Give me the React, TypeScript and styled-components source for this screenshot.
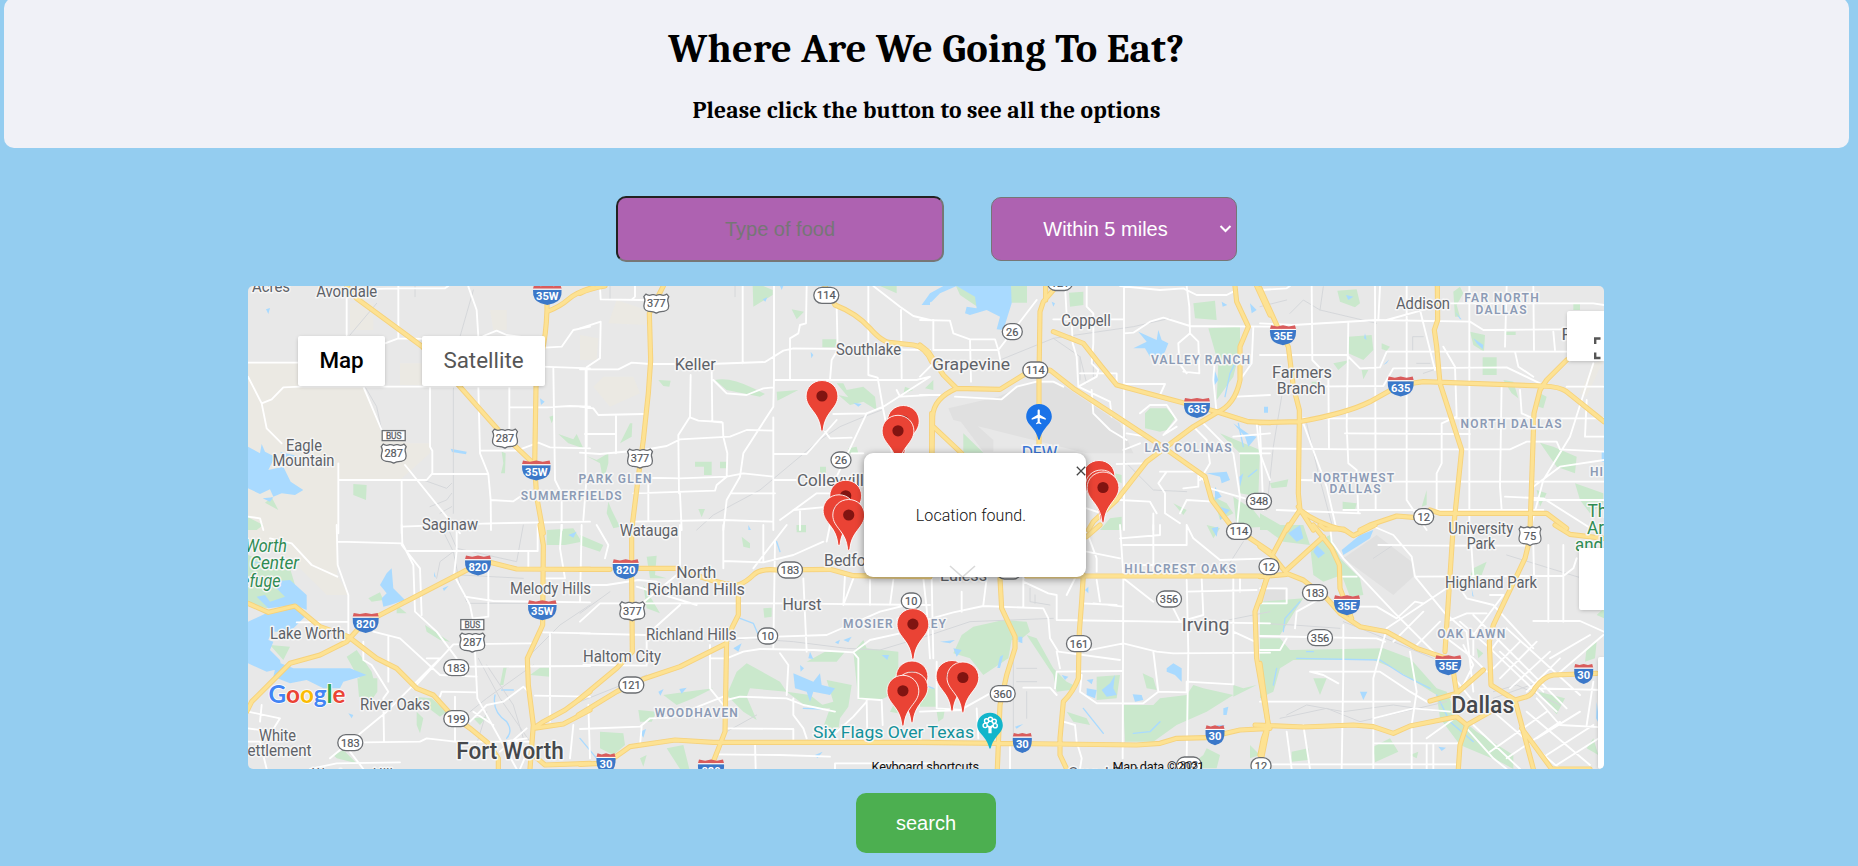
import React from "react";
import styled, { createGlobalStyle } from "styled-components";

const GlobalStyle = createGlobalStyle`
  html, body { margin: 0; background: #94cdf0; overflow: hidden; }
  * { box-sizing: border-box; }
`;

const Page = styled.main`
  height: 866px;
  padding: 0 9px 0 4px;
  display: flex;
  flex-direction: column;
  align-items: center;
  background: #94cdf0;
  font-family: "Liberation Sans", Arial, sans-serif;
`;

const Header = styled.header`
  width: 100%;
  height: 150px;
  margin-top: -2px;
  padding-top: 27px;
  border-radius: 10px;
  background: #f0f1f7;
  color: #000;
  text-align: center;
  font-family: Cambria, "Liberation Serif", serif;
`;

const Title = styled.h1`
  margin: 0;
  font-size: 40.5px;
  line-height: 48px;
  letter-spacing: 0.25px;
`;

const Subtitle = styled.h2`
  margin: 23px 0 0;
  font-size: 23.5px;
  line-height: 30px;
  letter-spacing: 0.16px;
`;

const SearchRow = styled.div`
  display: flex;
  align-items: center;
  gap: 47px;
  margin-top: 48px;
`;

const FoodInput = styled.input`
  width: 328px;
  height: 66px;
  border: 2px solid;
  border-color: #222 #767676 #767676 #222;
  border-radius: 10px;
  background: #ae62b1;
  color: #fff;
  font: 20px "Liberation Sans", Arial, sans-serif;
  text-align: center;
  &::placeholder { color: #767676; opacity: 1; }
`;

const SelectWrap = styled.div`
  position: relative;
  display: flex;
`;

const RangeSelect = styled.select`
  appearance: none;
  width: 246px;
  height: 64px;
  padding: 0 17px 0 0;
  border: 1px solid #767676;
  border-radius: 10px;
  background: #ae62b1;
  color: #fff;
  font: 20px "Liberation Sans", Arial, sans-serif;
  text-align: center;
  text-align-last: center;
`;

const Chevron = styled.svg`
  position: absolute;
  right: 5px;
  top: 27px;
  pointer-events: none;
`;

const MapFrame = styled.section`
  position: relative;
  width: 1356px;
  height: 483px;
  margin: 24px 1px 0 0;
  flex: none;
  overflow: hidden;
  border-radius: 5px;
  background: #e8e8e8;
  font-family: Roboto, sans-serif;
`;

const MapCanvas = styled.svg`
  display: block;
  font-family: Roboto, sans-serif;
`;

const MapTypeBar = styled.div`
  position: absolute;
  left: 50px;
  top: 50px;
  display: flex;
  gap: 37px;
`;

const MapTypeButton = styled.button<{ $active?: boolean; $width: number }>`
  width: ${(p) => p.$width}px;
  height: 50px;
  padding: 0 0 3px;
  border: 0;
  border-radius: 2px;
  background: #fff;
  box-shadow: 0 1px 4px -1px rgba(0, 0, 0, 0.3);
  color: ${(p) => (p.$active ? "#000" : "#565656")};
  font: ${(p) => (p.$active ? 500 : 400)} 22.4px Roboto, sans-serif;
`;

const CornerControl = styled.div<{ $top: number; $width: number; $height: number }>`
  position: absolute;
  right: 0;
  top: ${(p) => p.$top}px;
  width: ${(p) => p.$width}px;
  height: ${(p) => p.$height}px;
  background: #fff;
  border-radius: 2px 0 0 2px;
  box-shadow: 0 1px 4px -1px rgba(0, 0, 0, 0.3);
  display: flex;
  justify-content: flex-end;
  align-items: flex-end;
`;

const InfoWindow = styled.div`
  position: absolute;
  left: 616px;
  top: 167px;
  width: 222px;
  height: 124px;
  display: flex;
  align-items: center;
  justify-content: center;
  padding: 0 8px 0 0;
  border-radius: 9px;
  background: #fff;
  box-shadow: 0 2px 7px 1px rgba(0, 0, 0, 0.35);
  color: #111;
  font: 300 16px Roboto, sans-serif;
  letter-spacing: 0.07px;
`;

const CloseIcon = styled.svg`
  position: absolute;
  right: 0;
  top: 13px;
`;

const Tail = styled.svg`
  position: absolute;
  left: 84px;
  bottom: 0;
`;

const SearchButton = styled.button`
  width: 140px;
  height: 60px;
  margin: 24px 1px 0 0;
  border: 0;
  border-radius: 10px;
  background: #4caf50;
  color: #fff;
  font: 20px "Liberation Sans", Arial, sans-serif;
`;

type Sector = {
  x: number; y: number;
  tan?: string; dark?: string; park: string; water: string; stream?: string;
  rail: string; street: string; highway: string;
};

// Each sector holds its geometry at three times map scale, relative to its own origin.
const sectors: Sector[] = [
  {
    x: 240, y: 280,
    tan: "M24 248H175V320H370L425 460L500 490H570V520L480 600H295V760H24ZM330 70H400V150H330ZM480 250H545V315H480ZM750 90H800V150H760Z",
    park: "M340 612L380 615L378 660L340 645ZM75 668L95 652L115 690ZM24 712L70 735L50 750H24ZM928 410L945 405L935 430ZM955 462L1000 478L1010 462L1030 505L985 490ZM785 515L797 520L795 580H783L790 550Z",
    water: "M24 500L60 520L65 492L75 515L105 530L85 570L130 560L152 605L190 630L165 645L125 640L100 650L90 628L60 642L24 625ZM78 88L90 84L85 102ZM632 506L680 515L678 523L636 516ZM900 355L914 365L903 375ZM68 655L100 652L90 665ZM120 515L180 530L135 532Z",
    rail: "M410 70L330 165M375 320L410 380L425 450M700 30L660 170L640 330V700M525 0V50M550 600L620 625L635 610M570 680L620 660L635 640M600 700L635 680",
    street: "M320 20V165M475 18V175M24 248H174M24 290L65 370L80 445L125 490M65 370L95 358L130 322L180 320H880M370 320L425 450M495 555L660 760M570 320V500L577 512V580L560 600H295M577 582H745L720 520L715 320M745 582L752 660L753 750M295 550V760M485 602V760M685 20L710 90L715 170M730 168L770 152L800 165L880 175M435 190L475 175L640 178M915 203L965 200L1000 150L1050 140M905 260L1050 265M808 320V500M808 382H920L990 378L1050 380M720 512H830L895 488L930 502L1050 505M940 265L945 600L965 640V750M1037 265V600M752 660L820 664L840 650L1050 640M485 740L750 730L1050 725M340 28L475 25H615L625 18M24 710L60 715L70 750",
    highway: "M320 18L350 55L547 200L660 320L775 450L880 550M921 60V90Q918 170 905 220L888 320L884 560L890 650L910 760M921 95Q960 80 985 58T1060 22",
  },
  {
    x: 580, y: 280,
    tan: "M0 165L55 175L50 240H0ZM70 290H160L180 340L90 380L40 320ZM110 60L200 90V135L85 130Z",
    park: "M518 18H550L578 30V45L520 80ZM635 88L672 95L650 118ZM727 178H770L768 202H727ZM235 300L272 302L268 320L250 318ZM405 300Q450 290 520 325L555 342L540 350L440 330ZM590 335L655 330L592 362ZM770 310H790L800 330L850 320L885 350L890 390L850 365L810 375L775 345L805 352ZM345 545H395V585H372V560H345ZM420 545H440V565H420ZM355 687H375L365 712ZM20 528L50 540L85 520V550L70 605L60 550ZM85 665L95 690L120 740L100 745L80 700ZM720 560H738V582H720ZM150 430H157L155 470L120 490ZM805 505L830 500L835 520H805ZM900 18L950 40V18ZM975 320L1000 330L970 342ZM650 735H678V750H650Z",
    water: "M1025 75L1050 48V75ZM692 215L700 225L694 235ZM600 18H610L605 30ZM820 368L845 372L835 380ZM505 735L513 750H505ZM548 58L562 52L556 65Z",
    rail: "M905 390L840 415L780 440L720 480L540 630L400 705L350 750M465 18V50M90 18V55",
    street: "M60 22L62 58L190 60M165 18V50L155 60M0 145L62 125L60 235L20 262V500M0 268H115L155 248L210 252H390L555 246L610 212L640 205L1050 210M488 18V250M582 18V300L580 380L490 520L480 590L440 660L430 750M680 18L678 130L660 135L655 160L630 175V300M770 80L773 210L755 240L750 300M865 18V285L893 293L910 390L960 640M963 90L965 295M880 18L960 80L1000 108L1050 120M585 300H1010L1050 290L910 380L860 400L760 402M332 285L330 410L295 465L297 640M395 270L397 425L428 428L430 470L442 520L440 590L410 615L405 632L160 640M330 412L355 422L425 426M0 380L40 385L55 405L190 402M108 405V520M15 462H108M0 518L60 522L190 510L260 498L300 478L450 470L500 450L580 452M400 300L440 340L500 345L550 325L580 322M170 592L300 595L440 590L490 580L580 590M580 600H650M580 412V750M735 455L750 475L815 473M860 400L770 590M770 420L680 522H580M815 520H850M155 725L430 720L580 725M205 590V720M20 590L10 720M455 640H585M600 720L710 640L780 640M640 690L750 680M950 330L960 350L1050 345M300 640L305 750M660 690V750",
    highway: "M0 40Q30 25 75 18M250 18L208 100L212 240L205 340L190 480L175 590L155 750M735 18L765 75Q830 100 870 145T935 188L1000 195Q1035 200 1055 245M1055 400V520",
  },
  {
    x: 920, y: 280,
    dark: "M235 350L320 310H420L600 430L640 520H500L100 420L85 385ZM100 395L125 395L220 480V515H190Z",
    park: "M108 18H170L172 80L120 45ZM273 18H321V68H273ZM447 38L490 35V75L450 80ZM820 70L885 62L890 120L825 115ZM865 145L960 140V210L940 290L890 360L895 250ZM130 460L190 518H130ZM675 400L690 385H740L765 415L740 450L720 455L675 445ZM900 460L1020 510L1015 650L960 640V520ZM940 650L1000 690L1040 740L950 745ZM15 325L40 300V330ZM585 580L605 585V610L585 600ZM540 750L570 715L605 710V750ZM760 670L800 690L790 705ZM880 650L920 670L940 700L900 720Z",
    water: "M5 75L30 40L70 18H273L275 70L250 150L230 148L240 110L200 90L150 105L135 100L140 80L170 85L165 50L110 18L60 40L35 65ZM640 205L680 185L655 155L710 180L715 150L725 180L745 190L735 215L720 235L690 230L675 205ZM940 430L990 465L1010 470L985 500L975 470ZM860 580L920 575L930 600L905 610L900 590ZM885 620L905 650L885 660ZM900 680L930 690L900 720ZM880 260L895 300L880 320ZM905 65L922 75L908 80ZM990 70L1010 90L995 100ZM395 65L405 70L400 80ZM970 580L960 620L958 590Z",
    stream: "M960 220L930 280L915 350M955 430L970 500M985 590L1010 570",
    rail: "M240 240L400 175L640 140L750 115M400 175L480 230L500 310M610 540L700 630L800 635M480 230V300M520 230V290",
    street: "M0 120L90 122L100 160L150 178H225L235 210H40V120M150 178L153 305M235 210L350 60M235 210L245 260M435 18L440 105L455 120L458 190L470 230L475 320L530 290L535 270L515 250L520 190V100L500 80V18M400 118H610M612 18V750M612 160L640 158L690 125L730 113L810 138L1050 140M800 18L808 80L810 160L775 190L778 250L800 280M810 160L835 185L838 280L790 275M600 18L720 30L790 25L830 45H920L940 35M475 320L570 365L575 410M480 280H590V310M105 350L245 358L290 320L350 305H400L430 320M515 330L520 400L570 450L620 480M612 312H735L720 345M660 400L690 375H740L770 420L730 465L770 440M680 470L620 460M850 430L940 520L960 650L950 750M890 400L880 300L885 230M820 440L860 480L870 550L840 600M590 552L680 550M600 660L690 665L710 700M720 575H830L870 625L975 655M740 575L715 610L735 640V700L780 730M950 350L1050 345M1000 140L995 250L960 300M940 470L1050 460M1010 430L1020 520L1050 600M835 575V620L790 625M610 510L660 490M500 685L545 700M0 290L40 250H80M0 345H60M780 700L800 660L880 665M700 700V750M960 520H1050",
    highway: "M0 195L25 215L70 285L110 325L240 328L310 285L345 272L390 270L460 325L560 390L720 495L855 590L875 660L935 740M400 30L370 65L360 95L357 290V500M377 18V60M110 325Q40 355 38 410L36 520M40 440L125 520M400 155L490 190L545 260L590 315L750 358L890 395L985 425L1050 428M945 18L950 65L985 140L960 200V300Q945 375 890 398L820 440L720 515L680 545L590 660L520 725L505 750M1010 18L1050 105",
  },
  {
    x: 1260, y: 280,
    tan: "M1000 250L1030 240L980 350L960 340Z",
    park: "M232 32L290 28L300 70L285 82L240 65ZM265 170L335 165L340 210L310 240L265 220ZM220 250L270 240L235 270ZM305 270H325L310 298ZM630 155L675 165L672 215L640 195ZM668 232H710V285H668ZM580 35L600 20L610 40L590 75L600 110L585 110ZM365 190L390 200L380 212L365 207ZM735 155H767V165H735ZM840 488L880 500L950 530L945 580L890 560ZM30 610L85 598L80 620L35 625ZM500 630V675L485 680ZM248 665L290 670L285 690L248 688ZM945 610L1030 640V670L990 700L960 660ZM730 300L760 305L775 355L755 340ZM840 340L860 350L850 385L835 380ZM0 700L70 740L60 750H0ZM940 70H960V90H940ZM155 305H175V317H155ZM830 630L860 640L840 680Z",
    water: "M258 45L280 50L265 60ZM370 255L388 238L380 250ZM640 175L670 195L668 208L650 190ZM585 95L605 118H600ZM12 380H24V398H12ZM315 160L320 180L312 175ZM1025 515H1032V545H1025Z",
    rail: "M90 100L130 60L180 90L350 130M0 80L80 60M180 90L190 20M70 320L40 500L20 690M458 210V170H490M470 250H510M490 280L520 270M140 430L180 600L220 750",
    street: "M0 130L100 135L350 120L630 125L670 150L920 148M155 18L157 240L205 290L207 505M345 18L347 690M0 225H260L300 265L360 262L380 215H920M440 18V660M475 70L500 170L525 270M130 415H1032M140 320L370 318L400 265L740 262L840 310M0 505L270 508H750L800 485L890 485L900 508L1032 515M120 600L345 605H1032M628 18V750M725 310L720 620L725 690M265 130L260 440L265 550L290 570L295 700M255 460L630 462M250 690H850M0 30L80 25L90 18M0 440L10 690M130 430L200 620L230 750M550 200L585 260L590 410L545 430V550L530 580V690M380 120L560 70H1000L1032 75M820 20L822 210M880 155L885 210M765 215L775 260L820 290M1000 250L930 470L850 600L810 750M810 660H1032M820 620L900 560L1032 540M920 320H1030M980 360L975 470H1032M355 120L360 20M50 690L300 700M735 650L850 655L1000 750M440 660L500 750M740 18L735 200M780 330L785 400L830 420",
    highway: "M0 25L50 135L85 200L100 320L118 390V425L115 640L120 690L80 750M0 428L118 425Q260 400 330 365L420 315L490 305L850 318Q900 320 920 335L1032 425M532 18L533 120L523 150L530 200L540 310L605 510L580 750M920 240L860 300L840 330L822 400L810 750M120 690Q170 730 250 750M300 750L330 735L410 708L460 712M510 690L540 700H860L920 745M115 680L160 750",
  },
  {
    x: 240, y: 525,
    tan: "M24 0H290L292 150L325 210H260L150 100L24 40Z",
    park: "M24 90L110 120L150 130L165 180L135 230L80 250L24 235ZM385 220L420 202L430 225L395 230ZM320 395L350 375L395 440L400 460H360L345 440ZM352 460H412V500L395 525L357 515ZM90 360L150 365L130 405ZM555 300L630 350L600 345L560 320ZM520 515L575 520L620 560L600 575L560 545ZM530 560L550 580L540 625L530 600ZM790 428H800L790 480H780ZM870 450L900 428H930V455ZM700 580L740 575L720 600ZM280 690L310 675L350 715L290 700ZM920 15L1000 10L1025 50L975 60H920ZM470 240L500 265H470Z",
    water: "M90 170L150 165L200 210V255L165 240L85 250L50 215L75 210L90 230L135 215ZM24 290L85 262L165 243L200 270L150 320H95L85 345L100 350L90 375L120 405L125 430L80 440L24 415ZM110 410L160 430H330L380 450L310 470L300 490H250L200 465L150 475L100 455ZM420 180L440 145L455 130L460 190L495 225L450 240L430 245L425 220L440 205ZM608 190L626 182L612 198ZM582 140L588 158L582 154ZM325 565L340 570L335 580ZM985 30L1010 20L1000 38Z",
    stream: "M765 510Q755 560 800 590Q820 620 800 640M785 495H820M40 110L110 130",
    rail: "M600 0L640 80L660 180L680 230M715 400L780 520L870 650M660 150L850 160M880 420L740 520L690 560M690 235H880M870 390L960 300L1050 240M620 0L650 70L830 110L850 0M740 420L820 540L850 640M700 690L740 560M640 80L600 110L590 160",
    street: "M290 0L293 120L325 210V330M90 40L155 55L215 120L292 155M293 50L485 55M485 0L487 55L520 120L525 260L590 320L650 400M485 60L540 130L545 270M500 78H893V0M650 0V78L642 150L690 240L700 290M745 110V275L700 280M675 215L760 228L1050 232M325 290L170 292M400 320L480 340L600 450L710 455M370 350V405L395 420L445 500L430 520L432 650M445 335V470M270 700L440 560L600 400L560 400M520 490L640 358L880 355M680 425L1050 423M705 380L712 520L830 732M600 515L605 500L710 502M370 652L540 650L560 640L645 650H870M690 590L740 540L790 530L850 485L865 500M24 560L120 580L95 620L24 610M65 540L60 590M865 80V130M910 322L1050 325M930 325V590M885 512L1050 515M965 0L960 70L975 160H910M1025 0L1020 230M645 515V650M370 732L330 680M210 732L290 715L480 712M1000 600L990 700M700 560L760 600M24 650H60L80 732M790 650L860 640M840 732L880 640M780 680L860 610",
    highway: "M24 235L85 262L165 243L240 305L325 335L410 400L470 430L530 490L580 510L630 565L690 610L745 655L775 700V732M20 560L35 530L150 415L240 390L320 350L370 295L420 270L690 130M750 112L830 132L1050 133M900 0L910 60L908 300L862 400L865 480L880 600L870 732M1050 500L975 555L910 590L880 610L970 597L1050 555M880 690L915 720L1050 715",
  },
  {
    x: 580, y: 525,
    park: "M470 440L500 415L600 470L620 500L510 490L500 515L530 585L490 560L440 510ZM680 410L735 380H795L770 410ZM820 380L850 345L860 370L955 380V500L900 525H835ZM740 465L815 480L805 545L780 580L775 615L730 605L750 550H690L760 530ZM620 500L690 510L740 550L680 545ZM175 555L230 560L215 590H180ZM250 510L320 500L400 490L340 520L290 540ZM60 620L130 625L135 660L100 690L60 670ZM260 670L310 660L328 732H300ZM550 250L575 248V275L553 278ZM190 180L240 265L200 250ZM200 95L230 92L225 150L260 160H210ZM0 30L70 60L60 80L0 60ZM485 35L510 55V70L490 65ZM650 0H678V22H650ZM180 700L200 690L190 725ZM960 500L980 570L930 560Z",
    water: "M640 445L700 470L720 445L725 480L765 490L750 510L700 500L690 530L680 500L645 490ZM690 380L700 402L685 400ZM460 370L485 355L475 380ZM790 345L815 335L805 352ZM765 352L780 344L775 358ZM298 492L320 488L305 506ZM705 690L728 680L712 700ZM905 390H927L922 405ZM235 500L251 492L241 512ZM180 620L198 612L190 638ZM660 420L672 430L662 440Z",
    stream: "M480 280L520 295L535 330M590 50L600 80M670 550L730 552M0 640L50 700",
    rail: "M0 265L90 200M440 350L500 340L640 350L800 370L900 375L1050 330M0 530L200 450M530 570L440 620",
    street: "M300 0V130M430 0V130M430 108L550 112L640 90L730 50M520 130L620 0M0 180H80L175 165L230 170M150 235H600L1050 240M180 240L290 150M585 50L580 370M670 160L680 380M795 150L790 240M170 185L350 240M470 340L590 335L740 330L900 260L980 240M390 400H440L490 380L540 372L700 375L820 382L870 345L960 325M820 382L835 400V520L900 525M600 385L625 420L620 510M390 360V490L430 540M440 525L480 515L620 520L670 540L765 560M10 420L200 422V330M0 290L60 235H140M0 325L200 330M0 612L180 605L210 580L270 578L430 515M185 605L180 660M25 540L30 700M640 520V570L670 610L680 640M765 625L820 575L860 530M440 610L640 612V650M765 715H1050M600 690L750 695M525 655L527 730M405 688L600 690M860 525L862 640M905 525L908 600M940 165L930 240M870 165V240M1030 160L1040 250L1050 400M50 0L85 60L75 100M750 0L740 50M550 112V0M820 160L790 240M300 240L200 330M765 715V732",
    highway: "M155 30V110M155 160L157 380L110 430L-5 525M0 133H90M170 130H290L390 165L430 175L475 180Q500 170 520 150T590 135L750 133L820 152L1050 155M475 180V270L440 340L435 620L400 710M-5 570L110 500L190 462L300 425L440 355M0 718L60 715L100 700L150 665L285 645L400 652H1050",
  },
  {
    x: 920, y: 525,
    park: "M125 330L160 305L250 285L320 290L330 320L300 345H275L265 400L190 450L150 400L100 385ZM320 330L350 340L400 430L440 470L460 480L450 495L410 500L400 450ZM440 560L500 580L510 600L460 590ZM610 540H700L720 520L800 510L820 480L850 490L940 510L860 560L770 600L700 650H615ZM940 480L970 490L1010 480L940 515ZM1020 390H1050V460L1030 450ZM668 445L700 460L710 495L680 490ZM850 690L860 670L900 690L890 730H800ZM50 560L75 550L70 580L55 590ZM0 490H45L48 545H0ZM860 0L900 10L880 40ZM530 455L600 450L590 520L530 525ZM990 660L1020 690L990 700Z",
    water: "M500 490L530 495L525 520L500 510ZM545 495L570 475L585 450L580 490L590 510L560 515ZM500 465L520 462L515 478ZM740 430L760 415L785 430V470L765 450L740 440ZM638 508L665 510L670 525L645 530ZM100 370L125 375L110 395ZM295 335H307V355L295 350ZM425 450L445 455L435 465ZM240 395L250 389L240 429H232ZM910 550L925 545L920 570H910ZM890 600H915L900 614ZM285 605L310 597L290 611ZM495 195L505 185V205ZM875 10L895 5L890 35ZM60 350L105 345L90 355Z",
    stream: "M490 550L550 625M640 625L690 620L720 590M0 475L40 490",
    rail: "M0 340L150 290L400 280M330 190V230L390 240M345 210V235M290 430H350M290 470H350M280 390V650M320 500V580M610 290H900L1050 260M970 50L900 160",
    street: "M0 290L100 262L190 243L370 250L385 280L390 340L415 380L600 405M600 0L610 150L608 700M310 155V245M190 240L200 160M410 210L385 205L310 170M410 210V285L1050 295M410 440L605 438M410 440L405 490M310 488H390L410 510M130 550L220 500M410 380L420 430M485 235L590 240M610 245L520 235M485 380L610 355L710 380L760 385L1050 383M530 535L480 500L485 450M530 535H670L715 500L700 380M715 500L800 502V470L940 478V160M800 165L805 380L800 700M940 320L1005 350M700 230L610 160M760 250L780 290L850 270L845 160M800 200L1010 195M500 20L530 100V140M600 100L500 80M600 40L720 30V0M700 150V0M800 0L820 40L900 105L1050 100M170 550L175 640M50 410V550L130 555M35 160L40 400M430 590L465 600L470 650L485 700L480 732M125 200V260M610 60H800V0M620 120H760V140M530 165L540 230M960 160V200M440 210L470 150M0 560L130 555M270 655V732",
    highway: "M540 0L500 35M490 150L485 230L478 320L475 460Q460 500 430 530L420 640V690L440 732M240 160L245 250L285 335V370L260 450L240 540L232 732M320 153H1020M-5 652L650 660L720 655L770 640L860 638L960 615L1050 610M960 20L1050 80M1045 150L1005 260L1010 400L1045 600L1025 700",
  },
  {
    x: 1260, y: 525,
    dark: "M250 100L350 30L455 110L460 155L400 210ZM10 190L75 195V230H10Z",
    park: "M0 340H60L90 375L370 370L450 400L530 490L560 500L590 570L650 620L760 690V732L720 710L600 660L540 580L530 510L400 430L340 405H100L60 430L40 500L0 520ZM150 60L210 30L240 100L300 160L310 210L270 215L245 150L190 170L160 150ZM160 460H200L180 510ZM835 500L915 520L890 568ZM95 680L145 670V705L95 710ZM340 665L390 640L415 680L345 712ZM640 130L680 110L665 150L625 165ZM0 230L130 220L110 250L60 330H0ZM0 0H130L150 60L70 50ZM650 370L670 385L655 400ZM980 370L1010 350L1005 400L975 410ZM450 690L475 680L470 700ZM1010 270L1032 250V280ZM980 670L1000 640L1015 690Z",
    water: "M85 25L120 0L130 40L110 50ZM170 60L195 85L175 100L160 80ZM245 75L300 30L340 15L330 40L290 65L250 90ZM300 500H322L310 525ZM535 665L558 668L545 678ZM635 190L641 215L637 213ZM1010 530L1014 560V590L1008 580Z",
    stream: "M120 230L75 280L70 320M110 400L360 405L430 450L510 490M530 510L570 590L640 650M50 430L40 480M140 380H160",
    rail: "M0 295L100 300L240 310M80 570L140 540L250 560L400 540L540 560M340 100L400 60M700 500L770 480L900 540M250 290L400 350L520 400M740 90L1032 180M60 580L200 550L300 590L560 530M700 520L840 470",
    street: "M210 0L215 50L250 100L400 260L560 420M330 0L400 30L455 95L465 155L555 265M465 155L800 153H910L940 130L950 100M355 60L560 62H800M0 190H80V235H0M240 155H290M0 333L350 340L375 350M285 245H350L410 280L465 230L490 235M380 310L560 190M105 310L110 260L200 210M375 330L340 460V730M250 300V440L245 732M0 375H60L80 340M150 440H360L450 500L500 530M150 440L190 450L235 475M0 530H450M450 380L470 500L455 600V732M130 600L150 732M80 620L95 732M340 655H595M0 718H595M500 655V732M630 0L640 150M820 60L822 150M865 60V290M910 60V290M820 288H960L1032 320M600 290L690 370L890 560M640 270L920 550M740 310L960 510M720 380L850 500M560 290L620 265H680M600 190L620 220L700 240L820 370M560 340L640 400L680 440M700 430L780 350M720 460L830 350M750 490L870 380M800 500L900 400M690 380L740 310M870 400L990 330M890 450L1030 330M840 490L1032 495M830 520L900 600L1032 607M620 610L700 700L740 732M640 600L780 732M690 680L860 560M740 700L900 590M700 560L900 732M800 560L990 720M830 640L960 560M860 690L1000 600M890 720L1032 630M560 430L600 480L640 530M610 360L640 420L600 500M690 210H730L640 330V390M590 575L500 640M570 560L460 550L340 580M555 265L620 320L640 500M460 370L540 290M400 350L490 260M520 655V732M1000 470L980 600",
    highway: "M85 0L40 85M0 65L40 95L80 145L130 165L200 220L240 265L300 305L380 320L470 370L560 400M580 440L590 505M0 155L80 148M80 135L190 35M160 0L215 70L238 120L240 190L275 280M180 0L195 12H250L280 32L345 0M580 0L555 380M805 60L795 100L700 300L688 350L693 480L765 525L800 515Q815 510 825 490Q850 455 880 450L1010 445M510 528L590 505L670 435M-15 600L130 606L280 600L340 605L400 625L450 603L590 575L620 600L600 660L595 732M620 600L700 555L750 530M0 415L25 600L10 640L0 690M765 525L785 600L820 732M785 610L875 732H990M885 0L930 28L1032 40M25 140L0 230",
  },
];

type LabelKind = "town" | "area" | "city" | "green" | "greenItalic";
type LabelDef = [string, number, number, number, LabelKind, number?];

// text, centre x, baseline, width, kind, font size
const labels: LabelDef[] = [
  ["Acres", 271, 292, 38, "town"], ["Avondale", 346.7, 296.5, 61, "town"],
  ["Eagle", 304, 451, 36, "town"], ["Mountain", 303.5, 465.5, 62, "town"],
  ["Saginaw", 450, 530, 56, "town"], ["Keller", 695.3, 369.5, 41, "town"],
  ["Southlake", 868.5, 354.5, 65, "town"], ["Grapevine", 971, 370, 78, "town", 17],
  ["Coppell", 1086, 325.5, 49.5, "town"], ["Colleyville", 835, 486, 76, "town"],
  ["Addison", 1423, 309.3, 54, "town"], ["Farmers", 1302, 377.5, 60, "town"],
  ["Branch", 1301.3, 394.3, 49, "town"], ["P", 1567, 340, 11, "town"],
  ["Lake Worth", 307.5, 639.3, 75, "town"], ["River Oaks", 395, 710.3, 70, "town"],
  ["White", 277.5, 740.7, 37, "town"], ["Settlement", 275, 755.7, 73, "town"],
  ["Melody Hills", 550.5, 594.3, 81, "town"], ["Watauga", 649, 536, 58.5, "town"],
  ["North", 696.3, 578, 40, "town"], ["Richland Hills", 696, 595, 98, "town"],
  ["Richland Hills", 691.3, 640.3, 90.5, "town"], ["Haltom City", 622, 661.7, 78, "town"],
  ["Hurst", 802, 609.8, 39, "town"], ["Bedford", 852, 566, 56, "town"],
  ["Euless", 963.5, 580.5, 47, "town"], ["Irving", 1205.5, 631.3, 48, "town", 19],
  ["University", 1480.8, 534.3, 65, "town"], ["Park", 1481, 549, 28.5, "town"],
  ["Highland Park", 1491, 587.7, 92, "town"], ["Westover Hills", 356, 780, 88, "town"],
  ["Grand Prairie", 1112, 779, 88, "town"],
  ["PARK GLEN", 615, 483, 73, "area"], ["SUMMERFIELDS", 571.2, 500.3, 101, "area"],
  ["VALLEY RANCH", 1200.5, 364.3, 99, "area"], ["LAS COLINAS", 1188, 451.6, 87, "area"],
  ["FAR NORTH", 1501.5, 302, 74.5, "area"], ["DALLAS", 1501, 314.4, 51, "area"],
  ["NORTH DALLAS", 1511, 428.1, 101, "area"], ["NORTHWEST", 1353.7, 482, 81, "area"],
  ["DALLAS", 1355, 493.3, 51, "area"], ["HI", 1596.5, 475.8, 13, "area"],
  ["WOODHAVEN", 696.3, 717, 83, "area"], ["MOSIER VALLEY", 894.5, 628, 103, "area"],
  ["HILLCREST OAKS", 1180, 573.1, 111.5, "area"], ["OAK LAWN", 1471.2, 638, 68, "area"],
  ["Fort Worth", 510, 759.3, 107.5, "city"], ["Dallas", 1482.7, 713, 63, "city"],
  ["Worth", 266, 551.7, 42, "greenItalic"], ["Center", 274.5, 569, 49, "greenItalic"],
  ["Refuge", 256, 586.8, 49, "greenItalic"],
  ["The", 1602, 516.7, 29, "green"], ["Ar", 1595.5, 533.5, 17, "green"],
  ["and", 1589, 551, 28, "green"],
];

const labelStyles: Record<LabelKind, { fill: string; size: number; weight: number }> = {
  town: { fill: "#5e6268", size: 16.2, weight: 400 },
  area: { fill: "#8c9bb5", size: 12, weight: 600 },
  city: { fill: "#45484c", size: 23, weight: 500 },
  green: { fill: "#2e8b52", size: 18, weight: 400 },
  greenItalic: { fill: "#2e8b52", size: 17.5, weight: 400 },
};

const MapLabel = ({ def }: { def: LabelDef }) => {
  const [text, x, y, width, kind, size] = def;
  const look = labelStyles[kind];
  return (
    <text x={x - width / 2} y={y} textLength={width}
      lengthAdjust={kind === "area" ? "spacing" : "spacingAndGlyphs"}
      fontSize={size ?? look.size} fontWeight={look.weight}
      fontStyle={kind === "greenItalic" ? "italic" : "normal"}
      fill={look.fill} stroke="#f6f6f6" strokeWidth={3} strokeLinejoin="round" paintOrder="stroke">
      {text}
    </text>
  );
};

const interstates: [string, number, number][] = [
  ["35W", 547.3, 294.8], ["35W", 536.3, 470.3], ["635", 1197, 407.7], ["35E", 1283, 335],
  ["635", 1400.7, 386.3], ["820", 478, 565.3], ["820", 365.7, 622.7], ["35W", 542.3, 610],
  ["820", 625.7, 569], ["30", 606, 763], ["820", 711, 769.3], ["30", 1022.3, 742.7],
  ["30", 1215, 735], ["35E", 1347, 605], ["35E", 1448.3, 665], ["30", 1583.7, 673.7],
];

const Interstate = ({ text, x, y }: { text: string; x: number; y: number }) => {
  const h = text === "35W" ? 14.3 : text === "30" ? 9.5 : 13;
  return (
    <g transform={`translate(${x} ${y})`}>
      <path d={`M${-h} -5H${h}Q${h + 0.6} 6 ${h * 0.45} 8.5L0 10.2L${-h * 0.45} 8.5Q${-h - 0.6} 6 ${-h} -5Z`} fill="#3b78c9" />
      <path d={`M${-h + 1} -9.8L${-h * 0.45} -8.6L0 -9.8L${h * 0.45} -8.6L${h - 1} -9.8L${h} -6H${-h}Z`} fill="#d95c5c" />
      <path d={`M${-h} -5.6H${h}`} stroke="#fff" strokeWidth={0.9} />
      <text y={5.3} textAnchor="middle" fontSize={11.2} fontWeight={700} fill="#fff">{text}</text>
    </g>
  );
};

const usRoutes: [string, number, number, boolean?][] = [
  ["287", 505, 438.3], ["287", 393.7, 453.3, true], ["377", 656.3, 303.3], ["377", 640, 458.3],
  ["377", 632.3, 611], ["287", 472.3, 642.3, true], ["75", 1530, 535.7],
];

const UsRoute = ({ text, x, y, business }: { text: string; x: number; y: number; business?: boolean }) => (
  <g transform={`translate(${x} ${y})`}>
    {business && (
      <g transform="translate(0 -17.7)">
        <rect x={-11.5} y={-5} width={23} height={10} fill="#fff" stroke="#6b6e72" strokeWidth={1.3} />
        <text y={3} textAnchor="middle" fontSize={8.4} fill="#5e6268" stroke="#5e6268" strokeWidth={0.3}>BUS</text>
      </g>
    )}
    <path transform={text === "75" ? "scale(.88 1)" : undefined}
      d="M-10.5 -9.2Q-8 -7 -4 -8.6Q-2 -9 0 -7.8Q2 -9 4 -8.6Q8 -7 10.5 -9.2L12.5 -6.6Q10.5 -3.5 12 0Q14 7 7.5 8Q3 7.8 0 9.8Q-3 7.8 -7.5 8Q-14 7 -12 0Q-10.5 -3.5 -12.5 -6.6Z"
      fill="#fff" stroke="#6b6e72" strokeWidth={1.3} strokeLinejoin="round" />
    <text y={4} textAnchor="middle" fontSize={11} fill="#53565b" stroke="#53565b" strokeWidth={0.2}>{text}</text>
  </g>
);

const stateRoutes: [string, number, number][] = [
  ["114", 826.3, 295.3], ["26", 841, 460], ["26", 1012.3, 331.7], ["114", 1035.3, 370],
  ["121", 1060, 282.5], ["348", 1259, 501.3], ["114", 1239, 531.3], ["12", 1423.7, 516.7],
  ["183", 456.3, 667.7], ["199", 456.3, 718.7], ["183", 350.3, 742.7], ["183", 790, 570],
  ["10", 911.3, 601], ["10", 767.7, 636], ["121", 631.3, 685], ["356", 1169, 599],
  ["161", 1079, 643.7], ["360", 1002.7, 693.7], ["183", 1009, 571], ["12", 1269, 566.7],
  ["183", 1315, 592.7], ["356", 1320, 637.7], ["12", 1261, 765.7], ["303", 1189, 765],
];

const StateRoute = ({ text, x, y }: { text: string; x: number; y: number }) => {
  const w = text.length === 3 ? 25 : 20;
  return (
    <g transform={`translate(${x} ${y})`}>
      <rect x={-w / 2} y={-8} width={w} height={16} rx={8} fill="#fff" stroke="#6b6e72" strokeWidth={1.3} />
      <text y={4} textAnchor="middle" fontSize={11} fill="#53565b" stroke="#53565b" strokeWidth={0.2}>{text}</text>
    </g>
  );
};

// markers listed back to front: centre x, top y
const pins: [number, number][] = [
  [822, 380.5], [903.3, 405.5], [898, 415.3], [845.7, 480.3], [839, 494.8], [848.7, 499.5],
  [1099, 460.5], [1101.3, 470], [1103, 472], [912.9, 608.6], [912, 661], [912, 672],
  [902.9, 675.3], [952, 660.5], [962.9, 662],
];

const Pin = ({ x, y }: { x: number; y: number }) => (
  <g transform={`translate(${x} ${y})`}>
    <path d="M0 0C-9 0 -15.9 6.9 -15.9 15.6C-15.9 22 -12.4 26 -8.6 31C-4.3 36.6 -2 41.5 -1.2 49Q-1 51 0 51Q1 51 1.2 49C2 41.5 4.3 36.6 8.6 31C12.4 26 15.9 22 15.9 15.6C15.9 6.9 9 0 0 0Z"
      fill="#ea4335" stroke="#fff" strokeWidth={0.9} />
    <circle cy={15.5} r={5.6} fill="#811411" />
  </g>
);

const PLACE = "M0 0C-7.5 0 -12.8 5.6 -12.8 12.6C-12.8 17.5 -9.5 20.5 -6.5 24C-3.4 27.7 -1.8 31.5 -.8 35Q0 37 .8 35C1.8 31.5 3.4 27.7 6.5 24C9.5 20.5 12.8 17.5 12.8 12.6C12.8 5.6 7.5 0 0 0Z";

const layer = (key: keyof Sector, props: React.SVGProps<SVGPathElement>) =>
  sectors.map((s) =>
    s[key] ? (
      <path key={`${key}${s.x}-${s.y}`} d={String(s[key])}
        transform={`translate(${s.x} ${s.y}) scale(.33333)`}
        strokeLinecap="round" strokeLinejoin="round" {...props} />
    ) : null
  );

const CityMap = () => (
  <MapCanvas width={1356} height={483} viewBox="248 286 1356 483" role="img" aria-label="Dallas and Fort Worth map">
    {layer("tan", { fill: "#ebe9e3" })}
    {layer("dark", { fill: "#e0e0e0" })}
    {layer("park", { fill: "#cae8cc" })}
    {layer("water", { fill: "#a9daff" })}
    {layer("stream", { fill: "none", stroke: "#a9daff", strokeWidth: 4 })}
    {layer("rail", { fill: "none", stroke: "#d5d7da", strokeWidth: 3 })}
    {layer("street", { fill: "none", stroke: "#fff", strokeWidth: 5.6 })}
    {layer("highway", { fill: "none", stroke: "#f6d27c", strokeWidth: 15.5 })}
    {layer("highway", { fill: "none", stroke: "#fde293", strokeWidth: 10 })}

    {interstates.map(([t, x, y]) => <Interstate key={`${t}${x}`} text={t} x={x} y={y} />)}
    {usRoutes.map(([t, x, y, b]) => <UsRoute key={`${t}${x}`} text={t} x={x} y={y} business={b} />)}
    {stateRoutes.map(([t, x, y]) => <StateRoute key={`${t}${x}-${y}`} text={t} x={x} y={y} />)}
    {labels.map((l) => <MapLabel key={`${l[0]}${l[1]}-${l[2]}`} def={l} />)}

    <text x={1021.5} y={459} fontSize={18} textLength={36} fill="#3b78d8" stroke="#f6f6f6" strokeWidth={3} paintOrder="stroke">DFW</text>
    <text x={813} y={737.5} fontSize={17} textLength={161} lengthAdjust="spacingAndGlyphs" fill="#12919b" stroke="#f6f6f6" strokeWidth={3} paintOrder="stroke">Six Flags Over Texas</text>

    <g transform="translate(1039 404)">
      <path d={PLACE} fill="#1a73e8" />
      <path transform="translate(-8.8 4) scale(.74)" fill="#fff"
        d="M21 16v-2l-8-5V3.5c0-.83-.67-1.5-1.5-1.5S10 2.670 10 3.5V9l-8 5v2l8-2.5V19l-2 1.5V22l3.5-1 3.5 1v-1.5L13 19v-5.5l8 2.5z" />
    </g>
    <g transform="translate(990 712.7)">
      <path d={PLACE} fill="#12b5cb" />
      <g fill="none" stroke="#fff" strokeWidth={1.4}>
        <circle cx={-4.8} cy={12.8} r={2.1} />
        <circle cx={-3.4} cy={8.2} r={2.1} />
        <circle cx={0.4} cy={6.6} r={2.1} />
        <circle cx={4.2} cy={8.6} r={2.1} />
        <circle cx={5.2} cy={13} r={2.1} />
      </g>
      <path d="M-1.6 20.5V15L-4 13L-2 12.5L0 13.5L2.5 12L4 13L1.6 15.5V20.5Z" fill="#fff" />
    </g>

    {pins.map(([x, y]) => <Pin key={`${x}-${y}`} x={x} y={y} />)}

    <text x={268.5} y={702.5} fontFamily="Lato, sans-serif" fontSize={25} fontWeight={700} textLength={77}
      lengthAdjust="spacingAndGlyphs" stroke="#fff" strokeWidth={1.6} paintOrder="stroke">
      <tspan fill="#4285f4">G</tspan><tspan fill="#ea4335">o</tspan><tspan fill="#fbbc04">o</tspan>
      <tspan fill="#4285f4">g</tspan><tspan fill="#34a853">l</tspan><tspan fill="#ea4335">e</tspan>
    </text>
    <text x={871.5} y={771} fontSize={12.7} textLength={107.5} fill="#111">Keyboard shortcuts</text>
    <text x={1112.5} y={771} fontSize={12.7} textLength={92} fill="#111">Map data ©2021</text>
  </MapCanvas>
);

export default function App() {
  return (
    <>
      <GlobalStyle />
      <Page>
        <Header>
          <Title>Where Are We Going To Eat?</Title>
          <Subtitle>Please click the button to see all the options</Subtitle>
        </Header>
        <SearchRow>
          <FoodInput placeholder="Type of food" />
          <SelectWrap>
            <RangeSelect defaultValue="5">
              <option value="5">Within 5 miles</option>
            </RangeSelect>
            <Chevron width={13} height={10} viewBox="0 0 13 10">
              <path d="M1.5 2L6.5 7L11.5 2" fill="none" stroke="#fff" strokeWidth={2} />
            </Chevron>
          </SelectWrap>
        </SearchRow>
        <MapFrame>
          <CityMap />
          <MapTypeBar>
            <MapTypeButton $active $width={87}>Map</MapTypeButton>
            <MapTypeButton $width={123}>Satellite</MapTypeButton>
          </MapTypeBar>
          <CornerControl $top={25} $width={37} $height={50}>
            <svg width={11} height={25} viewBox="0 0 11 25">
              <path d="M7.500 2.500H2.200V8M2.200 16.500V22H7.500" fill="none" stroke="#565656" strokeWidth={2.4} />
            </svg>
          </CornerControl>
          <CornerControl $top={262} $width={25} $height={62} />
          <CornerControl $top={371} $width={6} $height={112} />
          <InfoWindow>
            Location found.
            <CloseIcon width={10} height={10} viewBox="0 0 10 10">
              <path d="M.8 .8L9.2 9.2M9.2 .8L.8 9.2" stroke="#444" strokeWidth={1.3} />
            </CloseIcon>
            <Tail width={30} height={12} viewBox="0 0 30 12">
              <path d="M2 1L14.5 12L27 1" fill="none" stroke="#d9d9d9" strokeWidth={1.6} />
            </Tail>
          </InfoWindow>
        </MapFrame>
        <SearchButton>search</SearchButton>
      </Page>
    </>
  );
}
